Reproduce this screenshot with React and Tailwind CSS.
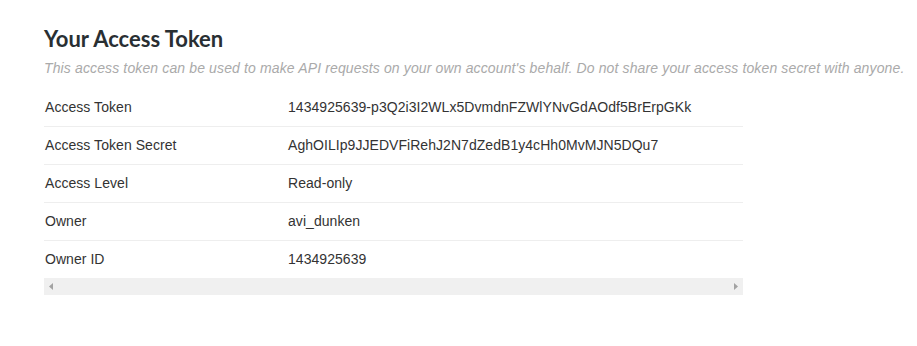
import React from 'react';

const rows = [
  ['Access Token', '1434925639-p3Q2i3I2WLx5DvmdnFZWlYNvGdAOdf5BrErpGKk'],
  ['Access Token Secret', 'AghOILIp9JJEDVFiRehJ2N7dZedB1y4cHh0MvMJN5DQu7'],
  ['Access Level', 'Read-only'],
  ['Owner', 'avi_dunken'],
  ['Owner ID', '1434925639'],
];

export default function App() {
  return (
    <div className="min-h-[346px] w-[917px] bg-white pl-[44px] pt-[24px] overflow-hidden">
      <h2 className="text-[22px] leading-[30px] font-bold text-[#292f33] font-['Lato','Open_Sans',sans-serif]">
        Your Access Token
      </h2>
      <p className="mt-[4px] whitespace-nowrap text-[14px] leading-[20px] italic tracking-[0.13px] text-[#aaaaaa] font-['Liberation_Sans',Arial,sans-serif]">
        This access token can be used to make API requests on your own account's behalf. Do not share your access token secret with anyone.
      </p>
      <div className="mt-[11px] w-[699px] font-['Liberation_Sans',Arial,sans-serif] text-[14px] text-[#333333] tracking-[0.05px]">
        {rows.map(([label, value], i) => (
          <div
            key={label}
            className={`flex items-center pl-[1px] ${i < rows.length - 1 ? 'border-b border-[#eeeeee] h-[38px]' : 'h-[37px]'}`}
          >
            <div className="w-[243px]">{label}</div>
            <div>{value}</div>
          </div>
        ))}
        <div className="flex h-[17px] items-center justify-between bg-[#f0f0f0] px-[5px]">
          <svg width="4" height="7" viewBox="0 0 4 7">
            <path d="M4 0 L0 3.5 L4 7 Z" fill="#a3a3a3" />
          </svg>
          <svg width="4" height="7" viewBox="0 0 4 7">
            <path d="M0 0 L4 3.5 L0 7 Z" fill="#a3a3a3" />
          </svg>
        </div>
      </div>
    </div>
  );
}
